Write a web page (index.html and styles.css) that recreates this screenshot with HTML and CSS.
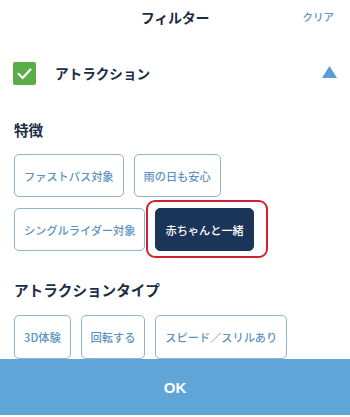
FILE: index.html
```html
<!DOCTYPE html>
<html lang="ja">
<head>
<meta charset="utf-8">
<link rel="stylesheet" href="styles.css">
</head>
<body>
<div class="screen">
  <div class="content">
    <header class="header">
      <span class="title">フィルター</span>
      <span class="clear">クリア</span>
    </header>
    <div class="filter-row">
      <span class="checkbox">
        <svg width="23" height="23" viewBox="0 0 23 23"><rect width="23" height="23" rx="2" fill="#5aad47"/><polyline points="5.5,11.8 9.6,16 17.5,7.5" fill="none" stroke="#fff" stroke-width="2.2" stroke-linecap="round" stroke-linejoin="round"/></svg>
      </span>
      <span class="filter-label">アトラクション</span>
      <svg class="caret" width="15" height="12" viewBox="0 0 15 12"><polygon points="7.5,0 15,12 0,12" fill="#5a9bd6"/></svg>
    </div>
    <section class="section">
      <h2 class="section-title">特徴</h2>
      <div class="chips">
        <span class="chip">ファストパス対象</span>
        <span class="chip">雨の日も安心</span>
        <span class="chip">シングルライダー対象</span>
        <span class="chip chip-active">赤ちゃんと一緒<span class="highlight"></span></span>
      </div>
    </section>
    <section class="section section-second">
      <h2 class="section-title">アトラクションタイプ</h2>
      <div class="chips">
        <span class="chip chip-tall">3D体験</span>
        <span class="chip chip-tall">回転する</span>
        <span class="chip chip-tall">スピード／スリルあり</span>
      </div>
    </section>
  </div>
  <footer class="footer">OK</footer>
</div>
</body>
</html>
```
FILE: styles.css
```css
* { box-sizing: border-box; }
html, body { margin: 0; padding: 0; background: #fff; }
body {
  font-family: "Noto Sans CJK JP", "Noto Sans", sans-serif;
  color: #1c2d45;
}
.screen {
  width: 350px;
  height: 417px;
  display: flex;
  flex-direction: column;
  overflow: hidden;
}
.content {
  flex: 1;
  overflow: hidden;
}
.header {
  height: 34px;
  display: flex;
  align-items: center;
  justify-content: center;
  position: relative;
}
.title {
  font-size: 14px;
  font-weight: 700;
  letter-spacing: -0.2px;
}
.clear {
  position: absolute;
  right: 16px;
  top: 10px;
  font-size: 10.5px;
  font-weight: 500;
  color: #5c93c2;
  line-height: 14px;
}
.filter-row {
  height: 78px;
  display: flex;
  align-items: center;
  padding: 0 13px;
}
.checkbox { display: flex; width: 23px; height: 23px; }
.filter-label {
  margin-left: 19px;
  font-size: 13.6px;
  font-weight: 700;
  flex: 1;
}
.caret { margin-right: 0; margin-top: -2px; }
.section { padding: 0 14px; }
.section-title {
  margin: 8px 0 14px;
  font-size: 14.6px;
  line-height: 20px;
  font-weight: 700;
}
.section-second .section-title { margin-top: 29px; margin-bottom: 15px; }
.chips {
  display: flex;
  flex-wrap: wrap;
  gap: 11px 10px;
}
.chip {
  position: relative;
  height: 43px;
  display: flex;
  align-items: center;
  padding: 0 9px;
  border: 1px solid #8fb2cd;
  border-radius: 5px;
  font-size: 11.2px;
  font-weight: 500;
  color: #5c93c2;
  white-space: nowrap;
}
.chip-tall { height: 44px; }
.chip-active {
  background: #1b3558;
  border-color: #1b3558;
  color: #fff;
}
.highlight {
  position: absolute;
  left: -10px;
  right: -15px;
  top: -9px;
  bottom: -8px;
  border: 2px solid #cf2130;
  border-radius: 9px;
}
.footer {
  flex: 0 0 56px;
  margin-bottom: 2px;
  background: #5fa5d8;
  color: #fff;
  display: flex;
  align-items: center;
  justify-content: center;
  font-family: "Liberation Sans", Arial, sans-serif;
  font-size: 15px;
  font-weight: 700;
}
```
